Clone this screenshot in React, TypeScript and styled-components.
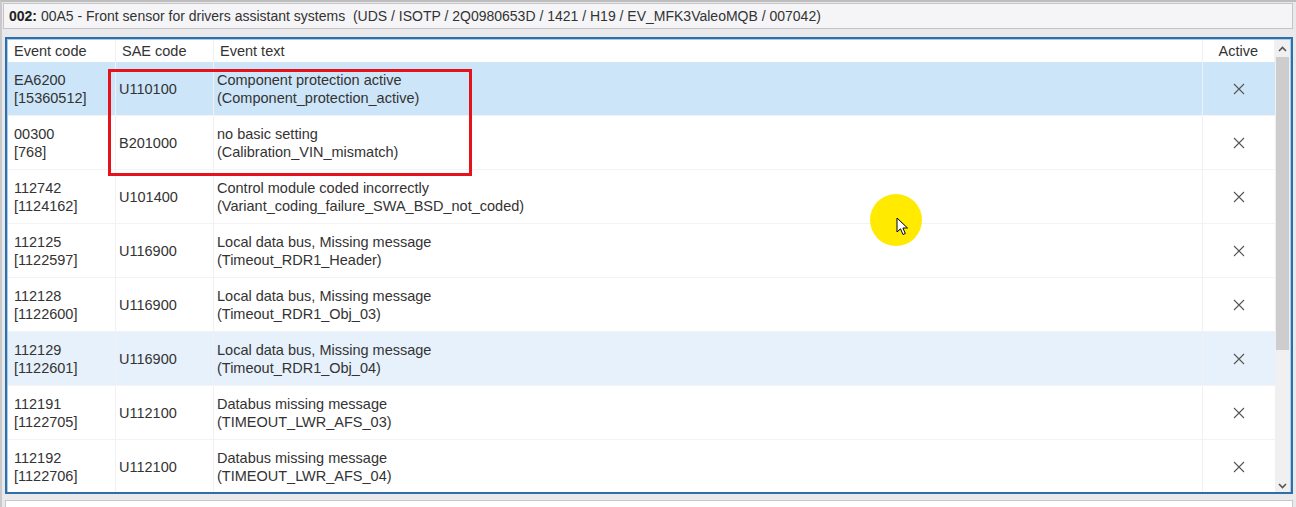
import React from 'react';
import styled, { createGlobalStyle } from 'styled-components';

type Row = {
  code: string;
  dec: string;
  sae: string;
  text: string;
  symbol: string;
  state?: 'selected' | 'hover';
};

const rows: Array<Row> = [
  { code: 'EA6200', dec: '[15360512]', sae: 'U110100', text: 'Component protection active', symbol: '(Component_protection_active)', state: 'selected' },
  { code: '00300', dec: '[768]', sae: 'B201000', text: 'no basic setting', symbol: '(Calibration_VIN_mismatch)' },
  { code: '112742', dec: '[1124162]', sae: 'U101400', text: 'Control module coded incorrectly', symbol: '(Variant_coding_failure_SWA_BSD_not_coded)' },
  { code: '112125', dec: '[1122597]', sae: 'U116900', text: 'Local data bus, Missing message', symbol: '(Timeout_RDR1_Header)' },
  { code: '112128', dec: '[1122600]', sae: 'U116900', text: 'Local data bus, Missing message', symbol: '(Timeout_RDR1_Obj_03)' },
  { code: '112129', dec: '[1122601]', sae: 'U116900', text: 'Local data bus, Missing message', symbol: '(Timeout_RDR1_Obj_04)', state: 'hover' },
  { code: '112191', dec: '[1122705]', sae: 'U112100', text: 'Databus missing message', symbol: '(TIMEOUT_LWR_AFS_03)' },
  { code: '112192', dec: '[1122706]', sae: 'U112100', text: 'Databus missing message', symbol: '(TIMEOUT_LWR_AFS_04)' }
];

const GlobalStyle = createGlobalStyle`
  html, body {
    margin: 0;
    padding: 0;
    background: #e9e9eb;
  }
  body {
    font-family: "Liberation Sans", Arial, sans-serif;
    font-size: 14px;
    color: #333;
  }
`;

const Window = styled.div`
  width: 1296px;
  height: 507px;
  box-sizing: border-box;
  border-top: 2px solid #bdbdbd;
  border-left: 2px solid #c9c9c9;
  padding: 1px 3px 0 1px;
  display: flex;
  flex-direction: column;
  overflow: hidden;
  position: relative;
`;

const TitleBar = styled.div`
  height: 26px;
  box-sizing: border-box;
  background: #f5f5f7;
  border: 1px solid #c4c4c6;
  display: flex;
  align-items: center;
  padding-left: 5px;
  white-space: pre;
  color: #333;
`;

const Bold = styled.b`
  font-weight: 700;
  color: #222;
`;

const Panel = styled.div`
  margin: 8px 0 0 2px;
  height: 457px;
  box-sizing: border-box;
  border: 2px solid #2d6fa6;
  box-shadow: inset 0 0 0 1px #a6cdec;
  padding: 1px;
  display: grid;
  grid-template-columns: 1fr 15px;
  background: #fff;
  overflow: hidden;
`;

const Table = styled.div`
  display: flex;
  flex-direction: column;
  min-width: 0;
  font-size: 14.5px;
`;

const cols = '108px 98px 1fr 72px';

const HeaderRow = styled.div`
  display: grid;
  grid-template-columns: ${cols};
  height: 22px;
  flex: none;
  background: #fff;
`;

const HeadCell = styled.div<{ $right?: boolean }>`
  display: flex;
  align-items: center;
  justify-content: ${(p) => (p.$right ? 'flex-end' : 'flex-start')};
  padding: ${(p) => (p.$right ? '0 16px 0 0' : '0 0 0 6px')};
  border-right: 1px solid #f1f1f1;
  color: #333;
`;

const Body = styled.div`
  position: relative;
  flex: 1;
`;

const DataRow = styled.div<{ $state?: 'selected' | 'hover' }>`
  display: grid;
  grid-template-columns: ${cols};
  height: 54px;
  border-bottom: 1px solid #f3f3f5;
  box-sizing: border-box;
  background: ${(p) =>
    p.$state === 'selected' ? '#cce5f8' : p.$state === 'hover' ? '#e6f1fb' : '#fff'};
`;

const Cell = styled.div<{ $pad?: number }>`
  display: flex;
  flex-direction: column;
  justify-content: center;
  padding-left: ${(p) => p.$pad ?? 6}px;
  padding-top: 1px;
  line-height: 18px;
  border-right: 1px solid #f1f1f3;
  white-space: nowrap;
`;

const MarkCell = styled.div`
  display: flex;
  align-items: center;
  justify-content: center;
  padding-right: 1px;
`;

const RedBox = styled.div`
  position: absolute;
  left: 100px;
  top: 7px;
  width: 364px;
  height: 107px;
  box-sizing: border-box;
  border: 3px solid #e3121b;
`;

const Highlight = styled.div`
  position: absolute;
  left: 862px;
  top: 132px;
  width: 52px;
  height: 52px;
  border-radius: 50%;
  background: #ffea00;
`;

const Pointer = styled.svg`
  position: absolute;
  left: 888px;
  top: 155px;
`;

const ScrollBar = styled.div`
  display: flex;
  flex-direction: column;
  background: #f0f0f0;
`;

const Arrow = styled.div`
  height: 17px;
  display: flex;
  align-items: center;
  justify-content: center;
  flex: none;
`;

const Thumb = styled.div`
  height: 293px;
  background: #cdcdcd;
  margin: 0 1px;
  flex: none;
`;

const Track = styled.div`
  flex: 1;
`;

const Footer = styled.div`
  margin: 6px 0 0 2px;
  flex: 1;
  background: #fff;
  border: 1px solid #c8c8ca;
  border-bottom: none;
`;

const Cross = () => (
  <svg width="12" height="12" viewBox="0 0 12 12">
    <path d="M1 1 L11 11 M11 1 L1 11" stroke="#555" strokeWidth="1.1" fill="none" />
  </svg>
);

const Chevron = ({ down }: { down?: boolean }) => (
  <svg width="9" height="6" viewBox="0 0 9 6">
    <path
      d={down ? 'M1 1 L4.5 4.5 L8 1' : 'M1 5 L4.5 1.5 L8 5'}
      stroke="#555"
      strokeWidth="1.6"
      fill="none"
    />
  </svg>
);

export default function App() {
  return (
    <>
      <GlobalStyle />
      <Window>
        <TitleBar>
          <Bold>002:</Bold>
          {' 00A5 - Front sensor for drivers assistant systems  (UDS / ISOTP / 2Q0980653D / 1421 / H19 / EV_MFK3ValeoMQB / 007042)'}
        </TitleBar>
        <Panel>
          <Table>
            <HeaderRow>
              <HeadCell>Event code</HeadCell>
              <HeadCell>SAE code</HeadCell>
              <HeadCell>Event text</HeadCell>
              <HeadCell $right>Active</HeadCell>
            </HeaderRow>
            <Body>
              {rows.map((r, i) => (
                <DataRow key={i} $state={r.state}>
                  <Cell>
                    <span>{r.code}</span>
                    <span>{r.dec}</span>
                  </Cell>
                  <Cell $pad={3}>{r.sae}</Cell>
                  <Cell $pad={3}>
                    <span>{r.text}</span>
                    <span>{r.symbol}</span>
                  </Cell>
                  <MarkCell>
                    <Cross />
                  </MarkCell>
                </DataRow>
              ))}
              <RedBox />
              <Highlight />
              <Pointer width="14" height="20" viewBox="0 0 14 20">
                <path
                  d="M1 1 L1 15 L4.5 11.8 L7 17.5 L9.3 16.5 L6.9 11 L11.5 11 Z"
                  fill="#fff"
                  stroke="#000"
                  strokeWidth="1"
                  strokeLinejoin="round"
                />
              </Pointer>
            </Body>
          </Table>
          <ScrollBar>
            <Arrow>
              <Chevron />
            </Arrow>
            <Thumb />
            <Track />
            <Arrow>
              <Chevron down />
            </Arrow>
          </ScrollBar>
        </Panel>
        <Footer />
      </Window>
    </>
  );
}
